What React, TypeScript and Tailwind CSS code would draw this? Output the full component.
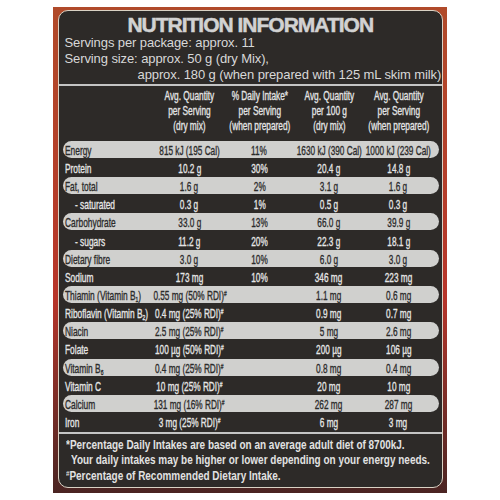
import React from "react";

type Row = {
  label: React.ReactNode;
  sub?: boolean;
  a: React.ReactNode;
  b?: string;
  c: string;
  d: string;
};

const Rdi = ({ v }: { v: string }) => (
  <>
    {v}
    <sup className="text-[8px]">#</sup>
  </>
);

const Vit = ({ n, s }: { n: string; s: string }) => (
  <>
    {n}
    <sub className="text-[8px]">{s}</sub>
  </>
);

const rows: Row[] = [
  { label: "Energy", a: "815 kJ (195 Cal)", b: "11%", c: "1630 kJ (390 Cal)", d: "1000 kJ (239 Cal)" },
  { label: "Protein", a: "10.2 g", b: "30%", c: "20.4 g", d: "14.8 g" },
  { label: "Fat, total", a: "1.6 g", b: "2%", c: "3.1 g", d: "1.6 g" },
  { label: "- saturated", sub: true, a: "0.3 g", b: "1%", c: "0.5 g", d: "0.3 g" },
  { label: "Carbohydrate", a: "33.0 g", b: "13%", c: "66.0 g", d: "39.9 g" },
  { label: "- sugars", sub: true, a: "11.2 g", b: "20%", c: "22.3 g", d: "18.1 g" },
  { label: "Dietary fibre", a: "3.0 g", b: "10%", c: "6.0 g", d: "3.0 g" },
  { label: "Sodium", a: "173 mg", b: "10%", c: "346 mg", d: "223 mg" },
  { label: <>Thiamin (<Vit n="Vitamin B" s="1" />)</>, a: <Rdi v="0.55 mg (50% RDI)" />, c: "1.1 mg", d: "0.6 mg" },
  { label: <>Riboflavin (<Vit n="Vitamin B" s="2" />)</>, a: <Rdi v="0.4 mg (25% RDI)" />, c: "0.9 mg", d: "0.7 mg" },
  { label: "Niacin", a: <Rdi v="2.5 mg (25% RDI)" />, c: "5 mg", d: "2.6 mg" },
  { label: "Folate", a: <Rdi v="100 µg (50% RDI)" />, c: "200 µg", d: "106 µg" },
  { label: <Vit n="Vitamin B" s="6" />, a: <Rdi v="0.4 mg (25% RDI)" />, c: "0.8 mg", d: "0.4 mg" },
  { label: "Vitamin C", a: <Rdi v="10 mg (25% RDI)" />, c: "20 mg", d: "10 mg" },
  { label: "Calcium", a: <Rdi v="131 mg (16% RDI)" />, c: "262 mg", d: "287 mg" },
  { label: "Iron", a: <Rdi v="3 mg (25% RDI)" />, c: "6 mg", d: "3 mg" },
];

const sans = "font-['Liberation_Sans',Arial,sans-serif]";

function Val({ children }: { children: React.ReactNode }) {
  return (
    <div className="flex justify-center">
      <span className="inline-block whitespace-nowrap scale-x-[0.61] origin-center">{children}</span>
    </div>
  );
}

export default function App() {
  return (
    <div className="w-[500px] h-[500px] bg-white pt-[7px] pl-[53px]">
      <div className="w-[394px] h-[486px] pt-[3px] pl-[4.5px] pr-[4px] pb-[5px] bg-gradient-to-b from-[#b04a2a] via-[#b7352a] via-60% to-[#4a2422]">
        <div className={`h-full rounded-[10px] border-[1.5px] border-[#d9d2c4] bg-[#2d2a28] text-[#e4e4e4] flex flex-col overflow-hidden ${sans}`}>
          {/* Heading */}
          <h1 className="pt-[2.5px] text-center text-[21px] leading-[21px] font-black tracking-[-1px] text-[#d2d2d2] [-webkit-text-stroke:0.5px_#d2d2d2]">
            NUTRITION INFORMATION
          </h1>
          <div className="pl-[6px] text-[13px] leading-[16px] tracking-[-0.1px] whitespace-nowrap text-[#d8d8d8]">
            <p>Servings per package: approx. 11</p>
            <p>Serving size: approx. 50 g (dry Mix),</p>
            <p className="pl-[73px]">approx. 180 g (when prepared with 125 mL skim milk)</p>
          </div>
          <div className="mt-[1.5px] h-[1.5px] shrink-0 bg-[#c4c4c4]" />

          {/* Column headings */}
          <div className="pl-[4px] pr-[3.5px] pt-[3.7px]">
            <div className="grid grid-cols-[92px_70px_70px_69px_70px] text-[12.5px] leading-[15px] text-center [-webkit-text-stroke:0.35px_currentColor]">
              <div />
              {[
                ["Avg. Quantity", "per Serving", "(dry mix)"],
                ["% Daily Intake*", "per Serving", "(when prepared)"],
                ["Avg. Quantity", "per 100 g", "(dry mix)"],
                ["Avg. Quantity", "per Serving", "(when prepared)"],
              ].map((h, i) => (
                <div key={i} className="flex justify-center">
                  <span className="inline-block whitespace-nowrap scale-x-[0.665] origin-center">
                    {h.map((l) => (
                      <span key={l} className="block">{l}</span>
                    ))}
                  </span>
                </div>
              ))}
            </div>
          </div>

          {/* Table rows */}
          <div className="mt-[6px] pl-[4px] pr-[3.5px] text-[13.5px] [-webkit-text-stroke:0.35px_currentColor]">
            {rows.map((r, i) => (
              <div key={i} className="h-[18.17px] flex items-center">
                <div
                  className={`h-[17px] w-full grid grid-cols-[92px_70px_70px_69px_70px] items-center rounded-full ${
                    i % 2 === 0 ? "bg-[#d0d0ce] text-[#2b2b2b]" : "text-[#e6e6e6]"
                  }`}
                >
                  <div className={r.sub ? "pl-[12.5px]" : "pl-[2.5px]"}>
                    <span className="inline-block whitespace-nowrap scale-x-[0.62] origin-left">{r.label}</span>
                  </div>
                  <Val>{r.a}</Val>
                  <Val>{r.b ?? ""}</Val>
                  <Val>{r.c}</Val>
                  <Val>{r.d}</Val>
                </div>
              </div>
            ))}
          </div>
          <div className="mt-[1.4px] h-[1.5px] shrink-0 bg-[#c4c4c4]" />

          {/* Footnotes */}
          <div className="pt-[3.4px] pl-[7px] text-[13px] leading-[15.5px] font-bold text-[#e2e2e2]">
            <p>
              <span className="inline-block whitespace-nowrap scale-x-[0.767] origin-left">
                *Percentage Daily Intakes are based on an average adult diet of 8700kJ.
              </span>
            </p>
            <p className="pl-[5.5px]">
              <span className="inline-block whitespace-nowrap scale-x-[0.767] origin-left">
                Your daily intakes may be higher or lower depending on your energy needs.
              </span>
            </p>
            <p>
              <span className="inline-block whitespace-nowrap scale-x-[0.767] origin-left">
                <sup className="text-[8px]">#</sup>Percentage of Recommended Dietary Intake.
              </span>
            </p>
          </div>
        </div>
      </div>
    </div>
  );
}
